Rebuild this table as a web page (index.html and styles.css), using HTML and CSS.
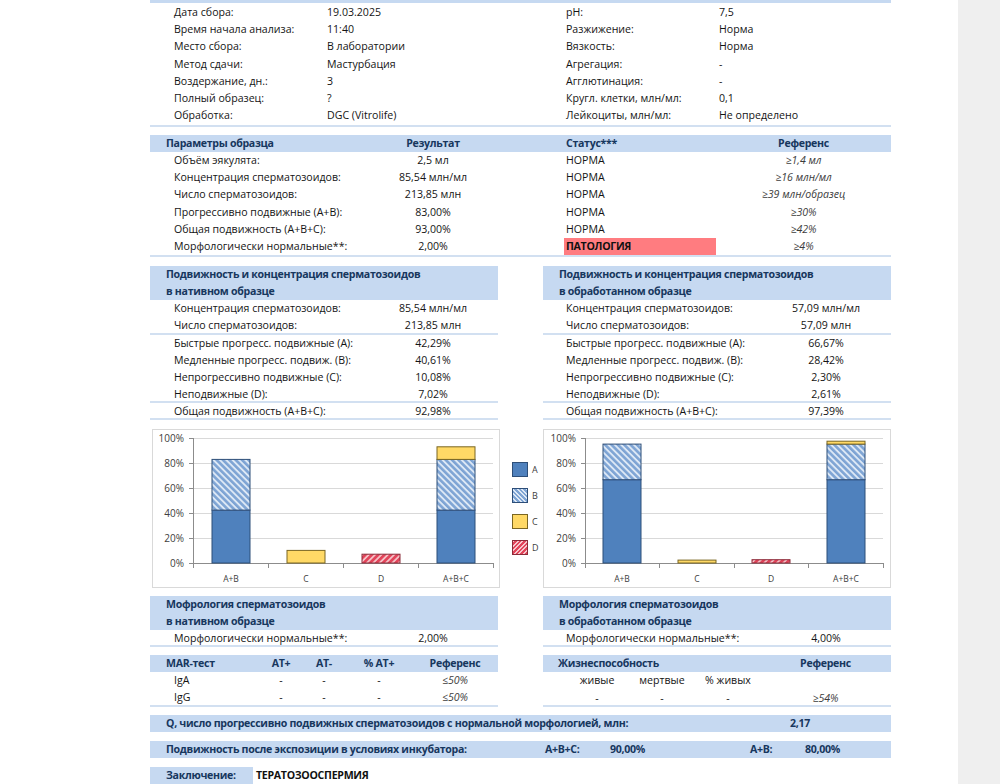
FILE: index.html
```html
<!DOCTYPE html>
<html lang="ru">
<head>
<meta charset="utf-8">
<title>Спермограмма</title>
<link rel="stylesheet" href="styles.css">
</head>
<body>
<div class="page">
  <div class="topband"></div>

  <div class="info">
    <div class="info-col">
      <div class="irow"><span class="ilabel">Дата сбора:</span><span>19.03.2025</span></div>
      <div class="irow"><span class="ilabel">Время начала анализа:</span><span>11:40</span></div>
      <div class="irow"><span class="ilabel">Место сбора:</span><span>В лаборатории</span></div>
      <div class="irow"><span class="ilabel">Метод сдачи:</span><span>Мастурбация</span></div>
      <div class="irow"><span class="ilabel">Воздержание, дн.:</span><span>3</span></div>
      <div class="irow"><span class="ilabel">Полный образец:</span><span>?</span></div>
      <div class="irow"><span class="ilabel">Обработка:</span><span>DGC (Vitrolife)</span></div>
    </div>
    <div class="info-col right">
      <div class="irow"><span class="ilabel">pH:</span><span>7,5</span></div>
      <div class="irow"><span class="ilabel">Разжижение:</span><span>Норма</span></div>
      <div class="irow"><span class="ilabel">Вязкость:</span><span>Норма</span></div>
      <div class="irow"><span class="ilabel">Агрегация:</span><span>-</span></div>
      <div class="irow"><span class="ilabel">Агглютинация:</span><span>-</span></div>
      <div class="irow"><span class="ilabel">Кругл. клетки, млн/мл:</span><span>0,1</span></div>
      <div class="irow"><span class="ilabel">Лейкоциты, млн/мл:</span><span>Не определено</span></div>
    </div>
  </div>

  <div class="params">
    <div class="prow phead">
      <span class="pc1 hpad">Параметры образца</span><span class="pc2">Результат</span><span class="pc3"></span><span class="pc4">Статус***</span><span class="pc5">Референс</span>
    </div>
    <div class="prow"><span class="pc1">Объём эякулята:</span><span class="pc2">2,5 мл</span><span class="pc3"></span><span class="pc4">НОРМА</span><span class="pc5 ref">≥1,4 мл</span></div>
    <div class="prow"><span class="pc1">Концентрация сперматозоидов:</span><span class="pc2">85,54 млн/мл</span><span class="pc3"></span><span class="pc4">НОРМА</span><span class="pc5 ref">≥16 млн/мл</span></div>
    <div class="prow"><span class="pc1">Число сперматозоидов:</span><span class="pc2">213,85 млн</span><span class="pc3"></span><span class="pc4">НОРМА</span><span class="pc5 ref">≥39 млн/образец</span></div>
    <div class="prow"><span class="pc1">Прогрессивно подвижные (A+B):</span><span class="pc2">83,00%</span><span class="pc3"></span><span class="pc4">НОРМА</span><span class="pc5 ref">≥30%</span></div>
    <div class="prow"><span class="pc1">Общая подвижность (A+B+C):</span><span class="pc2">93,00%</span><span class="pc3"></span><span class="pc4">НОРМА</span><span class="pc5 ref">≥42%</span></div>
    <div class="prow"><span class="pc1">Морфологически нормальные**:</span><span class="pc2">2,00%</span><span class="pc3"></span><span class="pc4 bad">ПАТОЛОГИЯ</span><span class="pc5 ref">≥4%</span></div>
  </div>

  <div class="two motility">
    <div class="col">
      <div class="band2">Подвижность и концентрация сперматозоидов<br>в нативном образце</div>
      <div class="mrow"><span class="ml">Концентрация сперматозоидов:</span><span class="mv">85,54 млн/мл</span></div>
      <div class="mrow sep"><span class="ml">Число сперматозоидов:</span><span class="mv">213,85 млн</span></div>
      <div class="mrow"><span class="ml">Быстрые прогресс. подвижные (A):</span><span class="mv">42,29%</span></div>
      <div class="mrow"><span class="ml">Медленные прогресс. подвиж. (B):</span><span class="mv">40,61%</span></div>
      <div class="mrow"><span class="ml">Непрогрессивно подвижные (C):</span><span class="mv">10,08%</span></div>
      <div class="mrow sep"><span class="ml">Неподвижные (D):</span><span class="mv">7,02%</span></div>
      <div class="mrow sep"><span class="ml">Общая подвижность (A+B+C):</span><span class="mv">92,98%</span></div>
    </div>
    <div class="col">
      <div class="band2">Подвижность и концентрация сперматозоидов<br>в обработанном образце</div>
      <div class="mrow"><span class="ml">Концентрация сперматозоидов:</span><span class="mv">57,09 млн/мл</span></div>
      <div class="mrow sep"><span class="ml">Число сперматозоидов:</span><span class="mv">57,09 млн</span></div>
      <div class="mrow"><span class="ml">Быстрые прогресс. подвижные (A):</span><span class="mv">66,67%</span></div>
      <div class="mrow"><span class="ml">Медленные прогресс. подвиж. (B):</span><span class="mv">28,42%</span></div>
      <div class="mrow"><span class="ml">Непрогрессивно подвижные (C):</span><span class="mv">2,30%</span></div>
      <div class="mrow sep"><span class="ml">Неподвижные (D):</span><span class="mv">2,61%</span></div>
      <div class="mrow sep"><span class="ml">Общая подвижность (A+B+C):</span><span class="mv">97,39%</span></div>
    </div>
  </div>

  <div class="charts">
    <div class="chart">
      <svg width="348" height="159" viewBox="0 0 348 159">
        <defs>
          <pattern id="hB1" width="4.5" height="4.5" patternUnits="userSpaceOnUse" patternTransform="rotate(-45)">
            <rect width="4.5" height="4.5" fill="#dde8f5"/><rect width="2.6" height="4.5" fill="#7ea4d4"/>
          </pattern>
          <pattern id="hD1" width="4.5" height="4.5" patternUnits="userSpaceOnUse" patternTransform="rotate(45)">
            <rect width="4.5" height="4.5" fill="#f6c6cc"/><rect width="2.8" height="4.5" fill="#e2445a"/>
          </pattern>
        </defs>
        <rect x="0.5" y="0.5" width="347" height="158" fill="#fff" stroke="#d9d9d9"/>
        <g stroke="#d9d9d9" stroke-width="1">
          <line x1="41" y1="9.5" x2="341" y2="9.5"/>
          <line x1="41" y1="34.5" x2="341" y2="34.5"/>
          <line x1="41" y1="59.5" x2="341" y2="59.5"/>
          <line x1="41" y1="84.5" x2="341" y2="84.5"/>
          <line x1="41" y1="109.5" x2="341" y2="109.5"/>
        </g>
        <g stroke="#8c8c8c" stroke-width="1">
          <line x1="41.5" y1="9" x2="41.5" y2="135"/>
          <line x1="37" y1="134.5" x2="341" y2="134.5"/>
          <line x1="37" y1="9.5" x2="41" y2="9.5"/>
          <line x1="37" y1="34.5" x2="41" y2="34.5"/>
          <line x1="37" y1="59.5" x2="41" y2="59.5"/>
          <line x1="37" y1="84.5" x2="41" y2="84.5"/>
          <line x1="37" y1="109.5" x2="41" y2="109.5"/>
          <line x1="41.5" y1="134" x2="41.5" y2="139"/>
          <line x1="116.5" y1="134" x2="116.5" y2="139"/>
          <line x1="191.5" y1="134" x2="191.5" y2="139"/>
          <line x1="266.5" y1="134" x2="266.5" y2="139"/>
          <line x1="341.5" y1="134" x2="341.5" y2="139"/>
        </g>
        <g class="ylab" text-anchor="end">
          <text x="32" y="13">100%</text>
          <text x="32" y="38">80%</text>
          <text x="32" y="63">60%</text>
          <text x="32" y="88">40%</text>
          <text x="32" y="113">20%</text>
          <text x="32" y="138">0%</text>
        </g>
        <g class="xlab" text-anchor="middle">
          <text x="79" y="153">A+B</text>
          <text x="154" y="153">C</text>
          <text x="229" y="153">D</text>
          <text x="304" y="153">A+B+C</text>
        </g>
        <g stroke-width="1">
          <rect x="60" y="81.1" width="38" height="52.9" fill="#4f81bd" stroke="#2d4e78"/>
          <rect x="60" y="30.4" width="38" height="50.7" fill="url(#hB1)" stroke="#2d4e78"/>
          <rect x="135" y="121.4" width="38" height="12.6" fill="#ffd966" stroke="#7a6622"/>
          <rect x="210" y="125.2" width="38" height="8.8" fill="url(#hD1)" stroke="#8a2a38"/>
          <rect x="285" y="81.1" width="38" height="52.9" fill="#4f81bd" stroke="#2d4e78"/>
          <rect x="285" y="30.4" width="38" height="50.7" fill="url(#hB1)" stroke="#2d4e78"/>
          <rect x="285" y="17.8" width="38" height="12.6" fill="#ffd966" stroke="#7a6622"/>
        </g>
      </svg>
    </div>
    <div class="legend">
      <div class="lg"><span class="sw sw-a"></span><span>A</span></div>
      <div class="lg"><span class="sw sw-b"></span><span>B</span></div>
      <div class="lg"><span class="sw sw-c"></span><span>C</span></div>
      <div class="lg"><span class="sw sw-d"></span><span>D</span></div>
    </div>
    <div class="chart">
      <svg width="348" height="159" viewBox="0 0 348 159">
        <defs>
          <pattern id="hB2" width="4.5" height="4.5" patternUnits="userSpaceOnUse" patternTransform="rotate(-45)">
            <rect width="4.5" height="4.5" fill="#dde8f5"/><rect width="2.6" height="4.5" fill="#7ea4d4"/>
          </pattern>
          <pattern id="hD2" width="4.5" height="4.5" patternUnits="userSpaceOnUse" patternTransform="rotate(45)">
            <rect width="4.5" height="4.5" fill="#f6c6cc"/><rect width="2.8" height="4.5" fill="#e2445a"/>
          </pattern>
        </defs>
        <rect x="0.5" y="0.5" width="347" height="158" fill="#fff" stroke="#d9d9d9"/>
        <g stroke="#d9d9d9" stroke-width="1">
          <line x1="42" y1="9.5" x2="340" y2="9.5"/>
          <line x1="42" y1="34.5" x2="340" y2="34.5"/>
          <line x1="42" y1="59.5" x2="340" y2="59.5"/>
          <line x1="42" y1="84.5" x2="340" y2="84.5"/>
          <line x1="42" y1="109.5" x2="340" y2="109.5"/>
        </g>
        <g stroke="#8c8c8c" stroke-width="1">
          <line x1="42.5" y1="9" x2="42.5" y2="135"/>
          <line x1="38" y1="134.5" x2="340" y2="134.5"/>
          <line x1="38" y1="9.5" x2="42" y2="9.5"/>
          <line x1="38" y1="34.5" x2="42" y2="34.5"/>
          <line x1="38" y1="59.5" x2="42" y2="59.5"/>
          <line x1="38" y1="84.5" x2="42" y2="84.5"/>
          <line x1="38" y1="109.5" x2="42" y2="109.5"/>
          <line x1="42.5" y1="134" x2="42.5" y2="139"/>
          <line x1="116.5" y1="134" x2="116.5" y2="139"/>
          <line x1="191.5" y1="134" x2="191.5" y2="139"/>
          <line x1="265.5" y1="134" x2="265.5" y2="139"/>
          <line x1="340.5" y1="134" x2="340.5" y2="139"/>
        </g>
        <g class="ylab" text-anchor="end">
          <text x="33" y="13">100%</text>
          <text x="33" y="38">80%</text>
          <text x="33" y="63">60%</text>
          <text x="33" y="88">40%</text>
          <text x="33" y="113">20%</text>
          <text x="33" y="138">0%</text>
        </g>
        <g class="xlab" text-anchor="middle">
          <text x="79" y="153">A+B</text>
          <text x="154" y="153">C</text>
          <text x="228" y="153">D</text>
          <text x="303" y="153">A+B+C</text>
        </g>
        <g stroke-width="1">
          <rect x="60" y="50.7" width="38" height="83.3" fill="#4f81bd" stroke="#2d4e78"/>
          <rect x="60" y="15.1" width="38" height="35.6" fill="url(#hB2)" stroke="#2d4e78"/>
          <rect x="135" y="131.1" width="38" height="2.9" fill="#ffd966" stroke="#7a6622"/>
          <rect x="209" y="130.7" width="38" height="3.3" fill="url(#hD2)" stroke="#8a2a38"/>
          <rect x="284" y="50.7" width="38" height="83.3" fill="#4f81bd" stroke="#2d4e78"/>
          <rect x="284" y="15.1" width="38" height="35.6" fill="url(#hB2)" stroke="#2d4e78"/>
          <rect x="284" y="12.2" width="38" height="2.9" fill="#ffd966" stroke="#7a6622"/>
        </g>
      </svg>
    </div>
  </div>

  <div class="two morph">
    <div class="col">
      <div class="band2">Мофрология сперматозоидов<br>в нативном образце</div>
      <div class="mrow sep"><span class="ml">Морфологически нормальные**:</span><span class="mv">2,00%</span></div>
    </div>
    <div class="col">
      <div class="band2">Морфология сперматозоидов<br>в обработанном образце</div>
      <div class="mrow sep"><span class="ml">Морфологически нормальные**:</span><span class="mv">4,00%</span></div>
    </div>
  </div>

  <div class="two tests">
    <div class="col">
      <div class="mar mhead"><span class="hpad">MAR-тест</span><span class="ctr">АТ+</span><span class="ctr">АТ-</span><span class="ctr">% АТ+</span><span class="ctr">Референс</span></div>
      <div class="mar"><span class="lpad">IgA</span><span class="ctr">-</span><span class="ctr">-</span><span class="ctr">-</span><span class="ctr ref">≤50%</span></div>
      <div class="mar sep"><span class="lpad">IgG</span><span class="ctr">-</span><span class="ctr">-</span><span class="ctr">-</span><span class="ctr ref">≤50%</span></div>
    </div>
    <div class="col">
      <div class="via mhead"><span class="vhead">Жизнеспособность</span><span class="ctr">Референс</span></div>
      <div class="via"><span></span><span class="ctr">живые</span><span class="ctr">мертвые</span><span class="ctr">% живых</span><span></span></div>
      <div class="via sep"><span></span><span class="ctr">-</span><span class="ctr">-</span><span class="ctr">-</span><span class="ctr ref">≥54%</span></div>
    </div>
  </div>

  <div class="qband">
    <span>Q, число прогрессивно подвижных сперматозоидов с нормальной морфологией, млн:</span><span class="qv">2,17</span>
  </div>

  <div class="incband">
    <span>Подвижность после экспозиции в условиях инкубатора:</span><span>A+B+C:</span><span>90,00%</span><span>A+B:</span><span>80,00%</span>
  </div>

  <div class="concl">
    <span class="clabel">Заключение:</span><span class="cval">ТЕРАТОЗООСПЕРМИЯ</span>
  </div>
</div>
</body>
</html>
```

FILE: styles.css
```css
* { box-sizing: border-box; margin: 0; padding: 0; }

html, body { background: #efefef; }

body {
  width: 1000px;
  height: 784px;
  overflow: hidden;
  font-family: "Open Sans", "Noto Sans", sans-serif;
  font-size: 10.6px;
  color: #141414;
}

.page {
  width: 958px;
  height: 784px;
  background: #fff;
  padding-left: 150px;
}

.page > * { width: 741px; }

.topband { height: 3px; background: #c6d9f1; }

/* info block */
.info {
  display: grid;
  grid-template-columns: 348px 348px;
  column-gap: 45px;
  border-bottom: 2px solid #d2e0f1;
  height: 124px;
  padding-top: 1px;
}
.info-col { padding-left: 24px; }
.info-col.right { padding-left: 23px; }
.irow { display: flex; height: 17.2px; line-height: 17.2px; white-space: nowrap; }
.ilabel { width: 153px; flex: none; }

/* params */
.params { margin-top: 8px; border-bottom: 2px solid #d2e0f1; }
.prow {
  display: grid;
  grid-template-columns: 233px 100px 81px 152px 175px;
  height: 17.2px;
  line-height: 17.2px;
  white-space: nowrap;
}
.prow .pc1 { padding-left: 24px; }
.prow .pc2 { text-align: center; }
.prow .pc4 { padding-left: 2px; }
.prow .pc5 { text-align: center; }
.phead {
  height: 17px;
  line-height: 16px;
  background: #c6d9f1;
  color: #17375e;
  font-weight: 700;
  letter-spacing: -0.3px;
}
.phead .pc1.hpad { padding-left: 16px; }
.ref { font-style: italic; color: #3c3c3c; }
.bad { background: #ff7c80; font-weight: 700; color: #111; letter-spacing: -0.3px; }

/* two-column sections */
.two {
  display: grid;
  grid-template-columns: 348px 348px;
  column-gap: 45px;
}
.motility { margin-top: 9px; }
.band2 {
  background: #c6d9f1;
  color: #17375e;
  font-weight: 700;
  letter-spacing: -0.3px;
  line-height: 17px;
  height: 34px;
  padding-left: 16px;
  white-space: nowrap;
}
.mrow {
  display: grid;
  grid-template-columns: 233px 100px 15px;
  height: 17.2px;
  line-height: 17.2px;
  white-space: nowrap;
}
.mrow .ml { padding-left: 24px; }
.col:last-child .mrow .ml { padding-left: 23px; }
.mrow .mv { text-align: center; }
.sep { box-shadow: inset 0 -2px 0 #d2e0f1; }

/* charts */
.charts {
  margin-top: 8.6px;
  display: grid;
  grid-template-columns: 348px 43px 348px;
  padding-left: 2px;
  height: 159px;
}
.chart svg { display: block; }
.ylab text { font-family: "Open Sans", sans-serif; font-size: 10px; fill: #404040; }
.xlab text { font-family: "Open Sans", sans-serif; font-size: 8.5px; fill: #404040; }

.legend {
  display: flex;
  flex-direction: column;
  gap: 11px;
  padding-top: 33px;
  padding-left: 12px;
}
.lg {
  display: flex;
  align-items: center;
  gap: 4px;
  height: 15px;
  font-size: 9px;
  color: #404040;
}
.sw { width: 16px; height: 15px; border: 1px solid #2d4e78; flex: none; }
.sw-a { background: #4f81bd; }
.sw-b { background: repeating-linear-gradient(45deg, #7ea4d4 0 1.8px, #dde8f5 1.8px 3.2px); }
.sw-c { background: #ffd966; border-color: #7a6622; }
.sw-d { background: repeating-linear-gradient(-45deg, #e2445a 0 2px, #f6c6cc 2px 3.2px); border-color: #8a2a38; }

/* morphology */
.morph { margin-top: 8px; }

/* MAR + viability */
.tests { margin-top: 8px; }
.mar {
  display: grid;
  grid-template-columns: 108px 46px 40px 70px 82px 2px;
  height: 17.2px;
  line-height: 17.2px;
  white-space: nowrap;
}
.mhead {
  height: 17px;
  line-height: 16px;
  background: #c6d9f1;
  color: #17375e;
  font-weight: 700;
  letter-spacing: -0.3px;
}
.hpad { padding-left: 16px; }
.lpad { padding-left: 24px; }
.ctr { text-align: center; }
.via {
  display: grid;
  grid-template-columns: 23px 62px 68px 64px 131px;
  height: 17.2px;
  line-height: 17.2px;
  white-space: nowrap;
}
.via.mhead { grid-template-columns: 217px 131px; }
.vhead { padding-left: 15px; }

/* Q */
.qband {
  margin-top: 8.6px;
  display: grid;
  grid-template-columns: 640px 101px;
  height: 17px;
  line-height: 16px;
  background: #c6d9f1;
  color: #17375e;
  font-weight: 700;
  letter-spacing: -0.3px;
  white-space: nowrap;
}
.qband > span:first-child { padding-left: 16px; }

.incband {
  margin-top: 9px;
  display: grid;
  grid-template-columns: 395px 65px 140px 55px 86px;
  height: 17px;
  line-height: 16px;
  background: #c6d9f1;
  color: #17375e;
  font-weight: 700;
  letter-spacing: -0.3px;
  white-space: nowrap;
}
.incband > span:first-child { padding-left: 16px; }

.concl {
  margin-top: 9px;
  display: grid;
  grid-template-columns: 103px 638px;
  height: 18px;
  line-height: 17px;
  white-space: nowrap;
  box-shadow: inset 0 -1px 0 #e3ebf5;
}
.clabel {
  background: #c6d9f1;
  color: #17375e;
  font-weight: 700;
  letter-spacing: -0.3px;
  padding-left: 16px;
}
.cval { padding-left: 3px; font-weight: 700; color: #111; letter-spacing: -0.3px; }
```
